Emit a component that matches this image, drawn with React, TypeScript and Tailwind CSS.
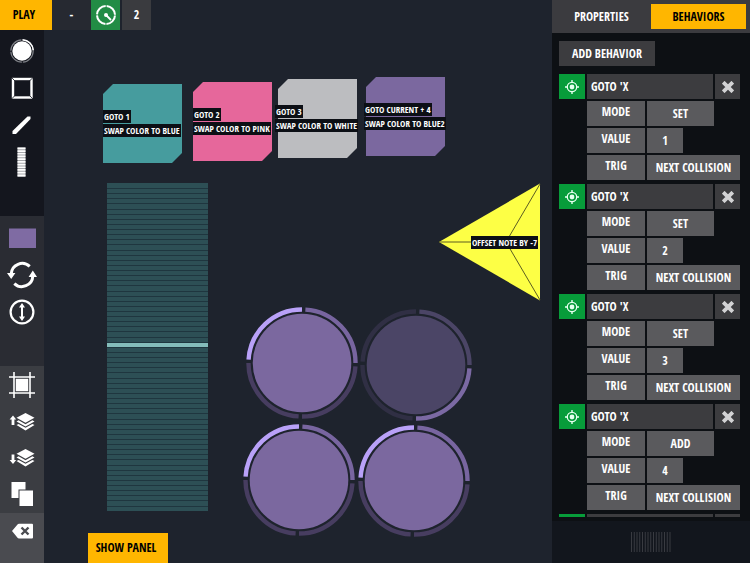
import type { ReactNode } from 'react'
import { clsx } from 'clsx'

interface CutSquare {
  id: string
  place: string
  labelPlace: string
  fill: string
  lines: string[]
}

const squares: CutSquare[] = [
  { id: 'a', place: 'left-[59px] top-[54px]', labelPlace: 'left-[59px] top-[80px]', fill: 'fill-[#469c9e]', lines: ['GOTO 1', 'SWAP COLOR TO BLUE'] },
  { id: 'b', place: 'left-[149px] top-[52px]', labelPlace: 'left-[149px] top-[78px]', fill: 'fill-[#e6679b]', lines: ['GOTO 2', 'SWAP COLOR TO PINK'] },
  { id: 'c', place: 'left-[234px] top-[49px]', labelPlace: 'left-[231px] top-[75px]', fill: 'fill-[#bcbdc0]', lines: ['GOTO 3', 'SWAP COLOR TO WHITE'] },
  { id: 'd', place: 'left-[322px] top-[47px]', labelPlace: 'left-[320px] top-[73px]', fill: 'fill-[#7b689f]', lines: ['GOTO CURRENT + 4', 'SWAP COLOR TO BLUE2'] },
]

// arcs run clockwise from the top left quarter
interface Pad {
  id: string
  place: string
  fill: string
  arcs: [string, string, string, string]
}

const litArcs: Pad['arcs'] = ['stroke-[#b9a1f8]', 'stroke-[#7865a0]', 'stroke-[#473d60]', 'stroke-[#473d60]']

const pads: Pad[] = [
  { id: 'p1', place: 'left-[200px] top-[275px]', fill: 'fill-[#7b689f]', arcs: litArcs },
  { id: 'p2', place: 'left-[314px] top-[277px]', fill: 'fill-[#4b4566]', arcs: ['stroke-[#302f44]', 'stroke-[#4b4566]', 'stroke-[#7b69a3]', 'stroke-[#302f44]'] },
  { id: 'p3', place: 'left-[197px] top-[392px]', fill: 'fill-[#7b689f]', arcs: litArcs },
  { id: 'p4', place: 'left-[312px] top-[393px]', fill: 'fill-[#7b689f]', arcs: litArcs },
]

const behaviors = [
  { id: 1, mode: 'SET', value: '1', trig: 'NEXT COLLISION' },
  { id: 2, mode: 'SET', value: '2', trig: 'NEXT COLLISION' },
  { id: 3, mode: 'SET', value: '3', trig: 'NEXT COLLISION' },
  { id: 4, mode: 'ADD', value: '4', trig: 'NEXT COLLISION' },
]

function Tag({ children }: { children: ReactNode }) {
  return (
    <span className="bg-[#0c0f15] px-px text-[9px] leading-[13px] whitespace-nowrap text-white">{children}</span>
  )
}

function PadShape({ pad }: { pad: Pad }) {
  return (
    <svg width="116" height="116" viewBox="-58 -58 116 116" className={clsx('absolute', pad.place)}>
      <circle r="49.3" className={pad.fill} />
      <g transform="rotate(1.8)" fill="none" strokeWidth="4.4">
        {pad.arcs.map((arc, i) => (
          <path key={i} d="M-53.5 -1.7A53.5 53.5 0 0 1 -1.7 -53.5" transform={`rotate(${i * 90})`} className={arc} />
        ))}
      </g>
    </svg>
  )
}

function Canvas() {
  return (
    <main className="relative min-w-0 flex-1 overflow-hidden">
      {squares.map(s => (
        <div key={s.id}>
          <svg width="79" height="79" viewBox="0 0 79 79" className={clsx('absolute', s.place)}>
            <path d="M10 0H79V69L69 79H0V10Z" className={s.fill} />
          </svg>
          <div className={clsx('absolute flex flex-col items-start gap-px', s.labelPlace)}>
            {s.lines.map(line => <Tag key={line}>{line}</Tag>)}
          </div>
        </div>
      ))}

      <svg width="101" height="328" viewBox="0 0 101 328" className="absolute top-[153px] left-[63px]">
        <rect width="101" height="328" fill="#2d4f55" />
        {Array.from({ length: 63 }, (_, i) => (
          <rect key={i} y={Math.round((i + 1) * 5.12)} width="101" height="1" fill="#1f363f" />
        ))}
        <rect y="160" width="101" height="4" fill="#84bcba" />
      </svg>

      <svg width="102" height="118" viewBox="0 0 102 118" className="absolute top-[153px] left-[395px]">
        <path d="M0 59L101 0.5V117.5Z" fill="#fdff45" />
        <path d="M0 59H67M101 1L67 59L101 117" fill="none" stroke="#5c5d22" strokeWidth="1" />
      </svg>
      <div className="absolute top-[206px] left-[427px] flex">
        <Tag>OFFSET NOTE BY -7</Tag>
      </div>

      {pads.map(p => <PadShape key={p.id} pad={p} />)}

      <button className="absolute bottom-0 left-11 h-[30px] w-20 bg-[#ffb600] pr-1 text-black">SHOW PANEL</button>
    </main>
  )
}

function Tool({ label, children }: { label: string; children: ReactNode }) {
  return (
    <button aria-label={label} className="flex h-9 w-full items-center justify-center">
      <svg width="30" height="30" viewBox="-15 -15 30 30" fill="none">{children}</svg>
    </button>
  )
}

function Layers() {
  return (
    <g fill="#fff">
      <path d="M3.5 -9L12.5 -4.2L3.5 0.8L-5.5 -4.2Z" />
      <path d="M-5.5 -0.6L-3.4 -1.7L3.5 2.2L10.4 -1.7L12.5 -0.6L3.5 4.5Z" />
      <path d="M-5.5 3L-3.4 1.9L3.5 5.8L10.4 1.9L12.5 3L3.5 8.5Z" />
    </g>
  )
}

function Sidebar() {
  return (
    <nav className="flex w-11 shrink-0 flex-col">
      <div className="flex h-[186px] flex-col gap-px bg-[#14161e] pt-[3px]">
        <Tool label="Circle">
          <circle r="9.7" fill="#fff" />
          <circle r="11.2" stroke="#7d7f85" strokeWidth="1.2" strokeDasharray="16.6 1" />
          <path d="M0.6 -11.3A11.3 11.3 0 0 1 11.3 -0.6" stroke="#fff" strokeWidth="1.5" />
        </Tool>
        <Tool label="Box">
          <rect x="-9" y="-9" width="18.5" height="18.5" stroke="#fff" strokeWidth="2.4" />
          <path d="M-11 -11L-7 -7M11.5 -11L7.5 -7M-11 11.5L-7 7.5M11.5 11.5L7.5 7.5" stroke="#14161e" strokeWidth="0.8" />
        </Tool>
        <Tool label="Line">
          <path d="M-9.5 6L5.5 -8.5H8.5V-6L-6 9H-9.5Z" fill="#fff" />
        </Tool>
        <Tool label="Strip">
          <path d="M-0.5 -14.5V15" stroke="#a5a6aa" strokeWidth="8" />
          <path d="M-0.5 -14.5V15" stroke="#fff" strokeWidth="8" strokeDasharray="1.7 1" />
        </Tool>
      </div>

      <div className="flex h-[150px] flex-col gap-px bg-[#2a2c33] pt-1">
        <Tool label="Color">
          <rect x="-13" y="-9.5" width="27" height="19.5" fill="#7f6ba3" />
        </Tool>
        <Tool label="Rotate">
          <path d="M-10.8 -1A11 11 0 0 1 7.7 -8.6M10.8 1A11 11 0 0 1 -7.7 8.6" stroke="#fff" strokeWidth="3" />
          <path d="M-15 -2H-6.6L-10.8 4ZM15 2H6.6L10.8 -4.4Z" fill="#fff" />
        </Tool>
        <Tool label="Direction">
          <circle r="11.4" stroke="#fff" strokeWidth="2.2" />
          <path d="M0 -6V6" stroke="#fff" strokeWidth="2" />
          <path d="M0 -9L3 -4.5H-3ZM0 9L3 4.5H-3Z" fill="#fff" />
        </Tool>
      </div>

      <div className="flex h-[147px] flex-col gap-px bg-[#3b3d42] pt-px">
        <Tool label="Grid snap">
          <path d="M-8 -13V13M8 -13V13M-13 -8H13M-13 8H13" stroke="#fff" strokeWidth="1.6" />
          <rect x="-6.2" y="-6.2" width="12.4" height="12.4" fill="#fff" />
        </Tool>
        <Tool label="Bring forward">
          <Layers />
          <path d="M-9 -6.5L-5.8 -2.5H-7.6V3H-10.4V-2.5H-12.4Z" fill="#fff" />
        </Tool>
        <Tool label="Send backward">
          <Layers />
          <path d="M-9 6L-5.8 2H-7.6V-3.5H-10.4V2H-12.4Z" fill="#fff" />
        </Tool>
        <Tool label="Duplicate">
          <path d="M-10.5 -13H3.5V-5.5H-3.5V3H-10.5Z" fill="#fff" />
          <rect x="-2.5" y="-4.5" width="13.5" height="15.5" fill="#fff" />
        </Tool>
      </div>

      <div className="flex-1 bg-[#4a4b50]">
        <Tool label="Delete">
          <path d="M-10 0L-4.5 -6.5Q-4 -7.2 -3 -7.2H10Q11 -7.2 11 -6.2V6.5Q11 7.5 10 7.5H-3Q-4 7.5 -4.5 6.8Z" fill="#fff" />
          <path d="M-0.5 -3.5L6.5 3.5M6.5 -3.5L-0.5 3.5" stroke="#4a4b50" strokeWidth="2.4" />
        </Tool>
      </div>
    </nav>
  )
}

function Behavior({ id, mode, value, trig }: (typeof behaviors)[number]) {
  const label = 'flex h-[25px] w-[58px] items-center justify-center bg-[#5a5a5d] pb-1'
  return (
    <section className="grid grid-cols-[26px_1fr] gap-x-0.5">
      <div className="flex h-[25px] items-center justify-center bg-[#079c3a]">
        <svg width="16" height="16" viewBox="-8 -8 16 16" fill="none" stroke="#e6fff0">
          <circle r="4.7" strokeWidth="1.3" />
          <circle r="2.4" fill="#e6fff0" stroke="none" />
          <path d="M0 -7V-4.5M0 7V4.5M-7 0H-4.5M7 0H4.5" strokeWidth="1.4" />
        </svg>
      </div>
      <div className="flex flex-col gap-0.5">
        <div className="flex gap-0.5">
          <h3 className="flex h-[25px] flex-1 items-center bg-[#3c3c3f] pl-1">GOTO 'X</h3>
          <button aria-label="Remove behavior" className="flex w-[25px] items-center justify-center bg-[#3c3c3f]">
            <svg width="12" height="12" viewBox="0 0 12 12" stroke="#d2d2d4" strokeWidth="3.8">
              <path d="M1.2 1.2L10.8 10.8M10.8 1.2L1.2 10.8" />
            </svg>
          </button>
        </div>
        <div className="flex gap-0.5">
          <span id={`mode-${id}`} className={label}>MODE</span>
          <button aria-describedby={`mode-${id}`} className="w-[67px] bg-[#5a5a5d]">{mode}</button>
        </div>
        <div className="flex gap-0.5">
          <label htmlFor={`value-${id}`} className={label}>VALUE</label>
          <input id={`value-${id}`} defaultValue={value} className="h-[25px] w-9 bg-[#5a5a5d] text-center" />
        </div>
        <div className="flex gap-0.5">
          <span id={`trig-${id}`} className={label}>TRIG</span>
          <button aria-describedby={`trig-${id}`} className="flex-1 bg-[#5a5a5d] whitespace-nowrap">{trig}</button>
        </div>
      </div>
    </section>
  )
}

// top edge of the next, collapsed row
function NextRow() {
  return (
    <div aria-hidden="true" className="grid h-[25px] grid-cols-[26px_1fr_25px] gap-x-0.5">
      <div className="bg-[#079c3a]" />
      <div className="bg-[#3c3c3f]" />
      <div className="bg-[#3c3c3f]" />
    </div>
  )
}

function Panel() {
  return (
    <aside className="flex w-[198px] shrink-0 flex-col bg-[#0d1014]">
      <div className="flex h-[33px] items-center bg-[#3b3b3f] pr-1">
        <button className="h-[25px] flex-1">PROPERTIES</button>
        <button className="h-[25px] w-[95px] bg-[#ffb600] text-black">BEHAVIORS</button>
      </div>
      <div className="mb-1 flex min-h-0 flex-1 flex-col overflow-hidden pt-2 pr-2.5 pl-[7px]">
        <button className="h-[25px] w-24 shrink-0 bg-[#3c3c3f]">ADD BEHAVIOR</button>
        <div className="mt-2 flex flex-col gap-1">
          {behaviors.map(b => <Behavior key={b.id} {...b} />)}
          <NextRow />
        </div>
      </div>
      <div className="flex h-[42px] items-center justify-center bg-[#12161d]">
        <svg width="40" height="20" viewBox="0 0 40 20">
          {Array.from({ length: 15 }, (_, i) => (
            <rect key={i} x={i * 2.75} width="1" height="20" fill="#393b41" />
          ))}
        </svg>
      </div>
    </aside>
  )
}

export default function App() {
  return (
    <div className="flex h-screen overflow-hidden bg-[#1e232d] font-['Open_Sans_Condensed','Roboto_Condensed',sans-serif] text-xs font-bold text-white">
      <div className="flex min-w-0 flex-1 flex-col">
        <header className="flex h-[30px] shrink-0">
          <button className="w-[52px] bg-[#ffb600] pr-1 text-black">PLAY</button>
          <button className="w-[39px] bg-[#262931]">-</button>
          <button aria-label="Tempo" className="flex w-[29px] items-center justify-center bg-[#228c45]">
            <svg width="22" height="22" viewBox="-11 -11 22 22" fill="none" stroke="#fff">
              <circle r="9" strokeWidth="2" strokeDasharray="13.1 1" strokeDashoffset="-0.5" />
              <circle r="2" fill="#fff" stroke="none" />
              <path d="M0 0L5 5" strokeWidth="1.8" />
            </svg>
          </button>
          <button className="ml-0.5 w-[29px] bg-[#3a3b3f]">2</button>
        </header>
        <div className="flex min-h-0 flex-1">
          <Sidebar />
          <Canvas />
        </div>
      </div>
      <Panel />
    </div>
  )
}
